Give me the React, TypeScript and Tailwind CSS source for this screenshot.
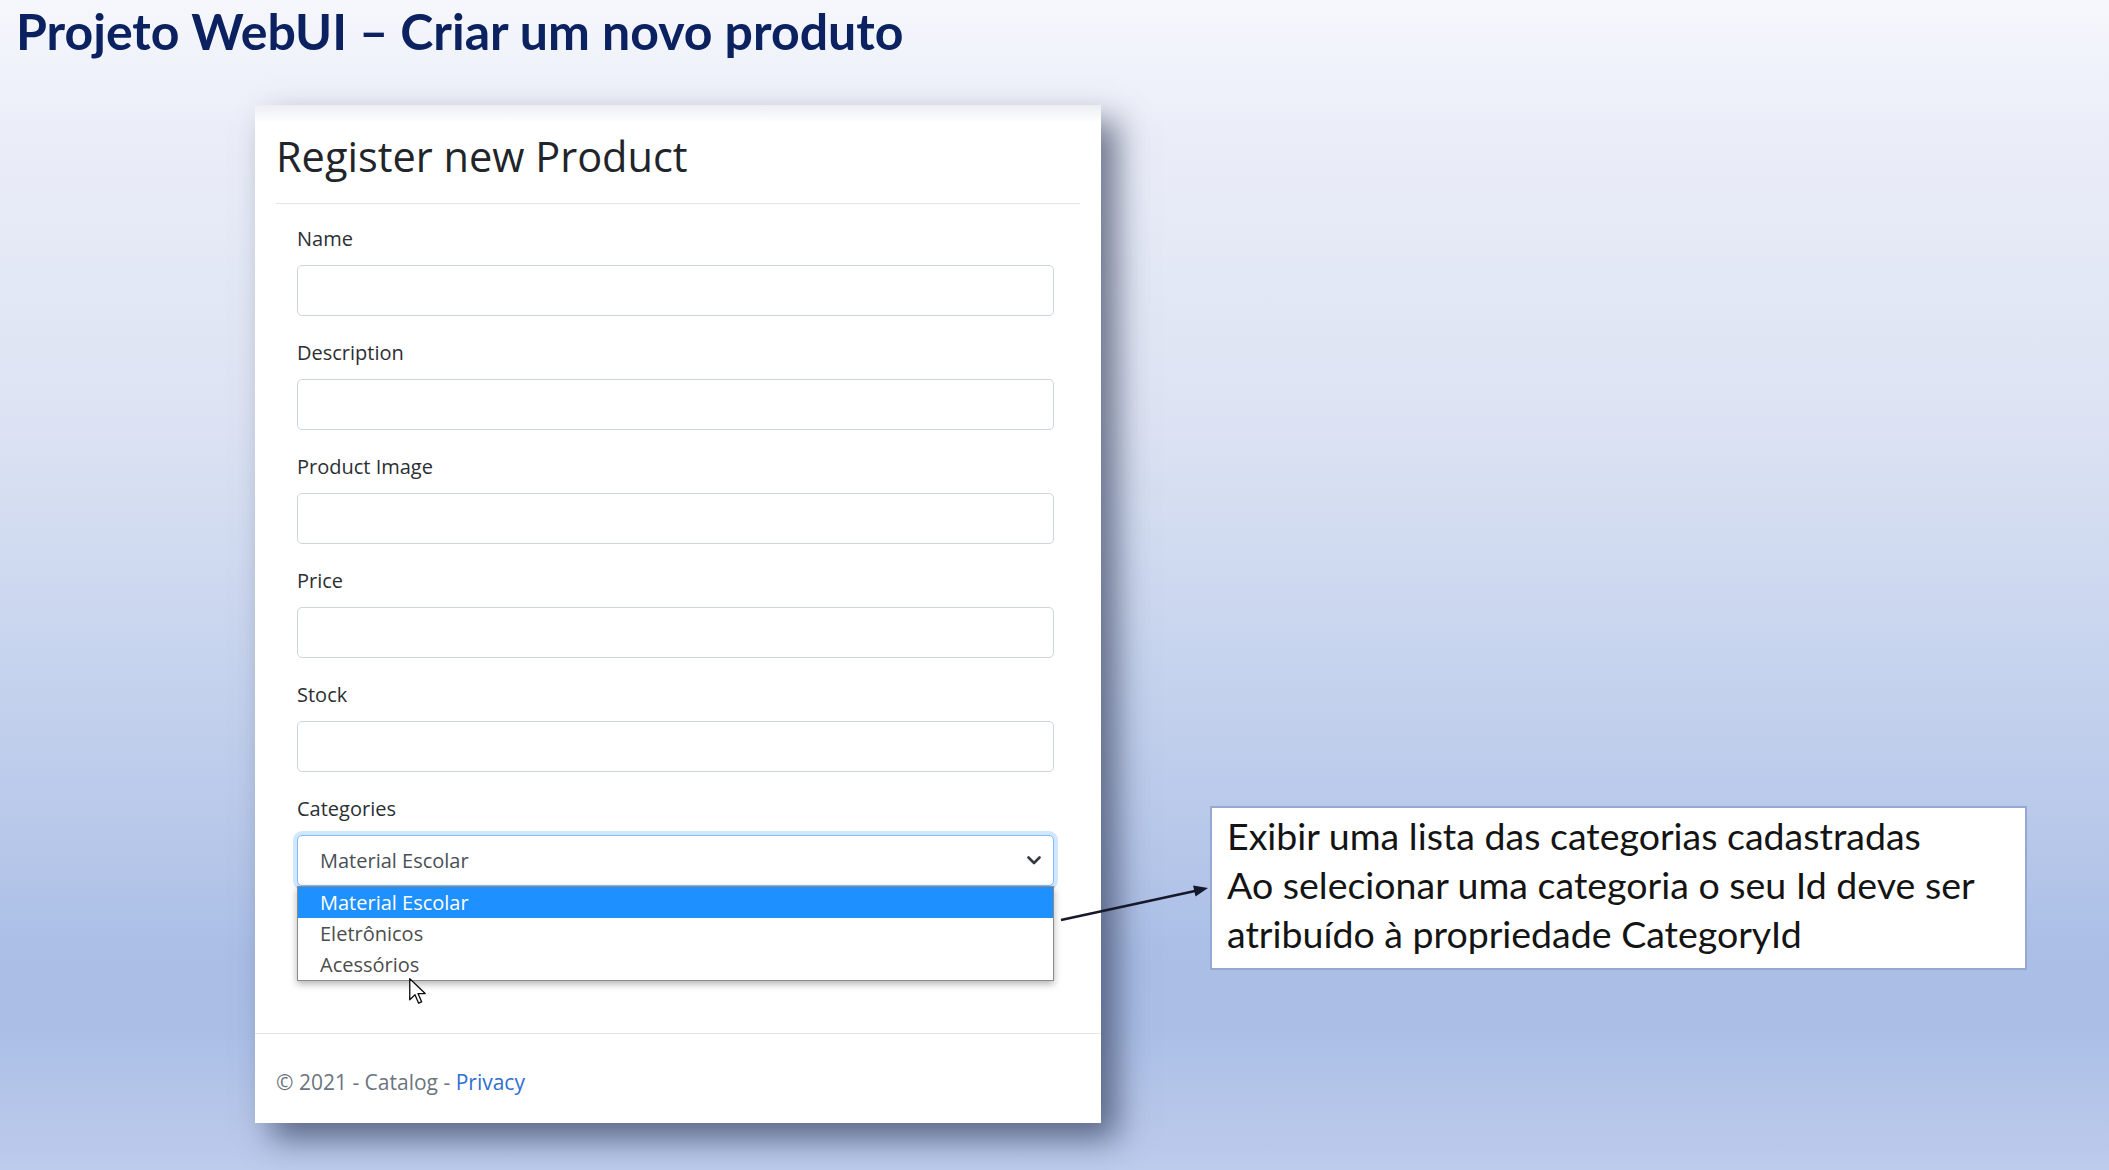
import React from "react";

const FIELDS = ["Name", "Description", "Product Image", "Price", "Stock"];
const OPTIONS = ["Material Escolar", "Eletrônicos", "Acessórios"];

function Field({ label }: { label: string }) {
  return (
    <div className="mb-[21px]">
      <label className="block text-[20px] leading-[32px] mb-[10px] text-[#2b2f33]">{label}</label>
      <div className="h-[51px] rounded-[5px] border border-[#ced4da] bg-white" />
    </div>
  );
}

function CategorySelect() {
  return (
    <div className="mb-[21px]">
      <label className="block text-[20px] leading-[32px] mb-[10px] text-[#2b2f33]">Categories</label>
      <div className="relative">
        <div className="h-[51px] rounded-[5px] border border-[#80bdff] bg-white shadow-[0_0_0_4px_rgba(0,123,255,0.18)] flex items-center pl-[22px] pr-[12px]">
          <span className="flex-1 text-[20px] text-[#495057]">Material Escolar</span>
          <svg width="14" height="9" viewBox="0 0 14 9" className="shrink-0">
            <path d="M1.5 1.5 L7 7 L12.5 1.5" fill="none" stroke="#343a40" strokeWidth="2.6" strokeLinecap="round" strokeLinejoin="round" />
          </svg>
        </div>
        {/* open dropdown list */}
        <div className="absolute left-0 right-0 top-full bg-white border border-[#8a8a8a] shadow-[0_3px_7px_rgba(0,0,0,0.3)] z-10">
          {OPTIONS.map((o, i) => (
            <div
              key={o}
              className={`h-[31px] pl-[22px] text-[20px] leading-[31px] ${
                i === 0 ? "bg-[#1e90ff] text-white" : "text-[#4d4d4d]"
              }`}
            >
              {o}
            </div>
          ))}
        </div>
      </div>
    </div>
  );
}

function Cursor() {
  return (
    <svg width="18" height="27" viewBox="0 0 12 18" className="absolute left-[154px] top-[873px] z-20">
      <path d="M0.5 0.5 L0.5 14.5 L4 11.2 L6.4 16.8 L8.4 15.9 L6 10.4 L10.8 10.4 Z" fill="#fff" stroke="#111" strokeWidth="0.9" strokeLinejoin="round" />
    </svg>
  );
}

function ProductCard() {
  return (
    <div className="relative w-[846px] h-[1018px] shrink-0 ml-[255px] bg-white flex flex-col shadow-[16px_16px_30px_rgba(35,45,75,0.62)]">
      <div className="h-[18px] bg-gradient-to-b from-[#eceef1] to-white" />
      <div className="px-[21px]">
        <h2 className="mt-[9px] text-[41.5px] leading-[49px] text-[#212529]">Register new Product</h2>
        <div className="mt-[22px] h-px bg-[#e3e5e8]" />
        <form className="pt-[19px] pl-[21px] pr-[26px]">
          {FIELDS.map((f) => (
            <Field key={f} label={f} />
          ))}
          <CategorySelect />
        </form>
      </div>
      <footer className="mt-auto h-[90px] border-t border-[#e6e6e6] px-[21px] pt-[33px] text-[21px] leading-[30px] text-[#6c757d]">
        © 2021 - Catalog - <span className="text-[#2f6fd0]">Privacy</span>
      </footer>
      <Cursor />
    </div>
  );
}

export default function App() {
  return (
    <div className="relative w-[2109px] h-[1170px] overflow-hidden font-['Open_Sans',sans-serif] bg-[linear-gradient(to_bottom,#f5f7fc_0%,#eaedf8_12%,#dde3f3_35%,#cbd7ef_52%,#b9c9ea_70%,#aabee6_82%,#abbfe6_88%,#bdcbec_100%)]">
      <h1 className="pl-[16px] pt-[6px] text-[50px] leading-none font-bold text-[#0c2160] font-['Lato',sans-serif]">
        Projeto WebUI – Criar um novo produto
      </h1>

      <div className="flex items-start mt-[49px]">
        <ProductCard />

        <div className="ml-[109px] mt-[701px] w-[817px] h-[164px] bg-white border-2 border-[#95a8d2] pl-[15px] pt-[3px] font-['Lato',sans-serif] text-[37.5px] leading-[49px] text-[#141414]">
          <p>Exibir uma lista das categorias cadastradas</p>
          <p>Ao selecionar uma categoria o seu Id deve ser</p>
          <p>atribuído à propriedade CategoryId</p>
        </div>
      </div>

      {/* connector arrow */}
      <svg width="160" height="48" viewBox="0 0 160 48" className="absolute left-[1055px] top-[880px] z-30">
        <line x1="6" y1="40" x2="140" y2="11" stroke="#15192b" strokeWidth="2.6" />
        <polygon points="153,8 140.5,16.4 138.1,5.6" fill="#15192b" />
      </svg>
    </div>
  );
}
